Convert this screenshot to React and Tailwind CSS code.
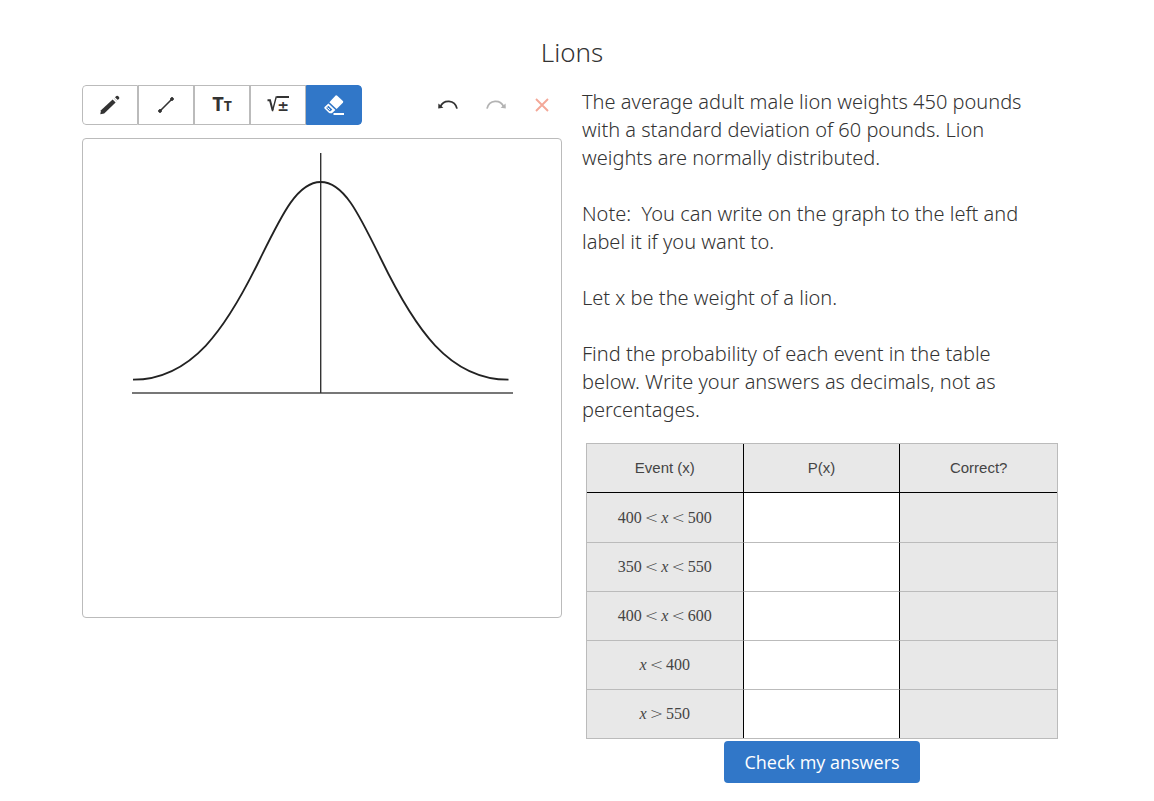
import { useState } from "react";

const PARAGRAPHS = [
  "The average adult male lion weights 450 pounds with a standard deviation of 60 pounds. Lion weights are normally distributed.",
  "Note:\u00a0 You can write on the graph to the left and label it if you want to.",
  "Let x be the weight of a lion.",
  "Find the probability of each event in the table below. Write your answers as decimals, not as percentages.",
];

const EVENTS = [
  ["400", "<", "x", "<", "500"],
  ["350", "<", "x", "<", "550"],
  ["400", "<", "x", "<", "600"],
  ["x", "<", "400"],
  ["x", ">", "550"],
];

function PencilIcon() {
  return (
    <svg width="20" height="20" viewBox="0 0 20 20" fill="currentColor">
      <path d="M0.3 19.2L1 15.3L12.6 4.4L15.6 7.4L4.2 18.4Z" />
      <path d="M13.6 3.4L16.6 6.4L17.1 5.9L14.1 2.9Z" opacity="0.3" />
      <path d="M15 2.2L16.4 0.9Q17.2 0.4 18 1.1L19 2.1Q19.7 3 19 3.8L17.8 5Z" />
    </svg>
  );
}

function LineIcon() {
  return (
    <svg width="16" height="16" viewBox="0 0 16 16" fill="currentColor" stroke="currentColor">
      <path d="M2 14L14 2" strokeWidth="1.6" />
      <circle cx="2" cy="14" r="1.4" />
      <circle cx="14" cy="2" r="1.4" />
    </svg>
  );
}

function TextIcon() {
  return (
    <span className="flex items-baseline font-['Open_Sans',sans-serif] font-bold leading-5">
      <span className="text-xl leading-5">T</span>
      <span className="text-sm leading-5">T</span>
    </span>
  );
}

// radical sign with a real plus-minus under its bar
function MathIcon() {
  return (
    <span className="flex items-start">
      <svg width="10" height="16" viewBox="0 0 10 16" fill="none" stroke="currentColor">
        <path d="M0.5 4.2H3L5.6 14.2" strokeWidth="2" />
        <path d="M5.4 15.2L9.2 1H10" strokeWidth="1.4" />
      </svg>
      <span className="border-t-2 font-['DejaVu_Sans',sans-serif] text-sm leading-4 font-bold">±</span>
    </span>
  );
}

function EraserIcon() {
  return (
    <svg width="22" height="20" viewBox="0 0 22 20" fill="none">
      <path d="M12.6 0.6Q13.4 0 14.2 0.7L19.9 6.1Q20.6 6.9 19.9 7.7L13.6 14L6.4 7.2Z" fill="currentColor" />
      <path
        d="M5.4 8.4L1.6 11.9Q0.9 12.6 1.5 13.4L5.6 17.6Q6.3 18.3 7.1 18.2H8.9L12.4 15Z"
        fill="currentColor"
      />
      <path d="M5.3 10.8L3.2 12.9L6.4 16.2H7.6L9.3 14.6Z" fill="#3177c8" />
      <path d="M4.4 12.6L7 14.8" stroke="currentColor" strokeWidth="1" />
      <path d="M10.5 19H21" stroke="currentColor" strokeWidth="1.8" />
    </svg>
  );
}

function UndoIcon({ className }) {
  return (
    <svg className={className} width="20" height="10" viewBox="0 0 20 10" fill="none">
      <path d="M2.4 6.6C5.4-0.6 16.8-1 19 8.6" stroke="currentColor" strokeWidth="1.8" />
      <path d="M0.4 3.4L0.2 8.6L5.4 7.8Z" fill="currentColor" />
    </svg>
  );
}

const TOOLS = [
  { label: "Pencil", icon: PencilIcon },
  { label: "Line", icon: LineIcon },
  { label: "Text", icon: TextIcon },
  { label: "Math", icon: MathIcon },
  { label: "Eraser", icon: EraserIcon },
];

function Toolbar() {
  const [active, setActive] = useState("Eraser");

  return (
    <div className="flex items-center justify-between">
      <div className="flex overflow-hidden rounded-sm">
        {TOOLS.map(({ label, icon: Icon }) => (
          <button
            key={label}
            aria-label={label}
            aria-pressed={active === label}
            onClick={() => setActive(label)}
            className={`flex h-10 w-14 items-center justify-center border first:rounded-l-sm last:rounded-r-sm ${
              active === label
                ? "border-[#3177c8] bg-[#3177c8] text-white"
                : "border-[#bbb] bg-white text-[#333]"
            }`}
          >
            <Icon />
          </button>
        ))}
      </div>
      <div className="flex items-center gap-7 pr-3">
        <button aria-label="Undo" className="text-[#333]">
          <UndoIcon />
        </button>
        <button aria-label="Redo" className="text-[#b3b3b3]">
          <UndoIcon className="-scale-x-100" />
        </button>
        <button aria-label="Clear" className="text-[#f4a898]">
          <svg width="16" height="16" viewBox="0 0 16 16" fill="none" stroke="currentColor" strokeWidth="1.9">
            <path d="M2 2L14 14M14 2L2 14" />
          </svg>
        </button>
      </div>
    </div>
  );
}

function Graph() {
  return (
    <div className="aspect-square rounded-sm border border-[#bbb]">
      <svg className="block h-full w-full" viewBox="83 139 478 478" fill="none">
        <path d="M132 393H513" stroke="#777" strokeWidth="1.8" />
        <path d="M320.7 153V393" stroke="#333" strokeWidth="1.4" />
        <path
          d="M133 379.7C192 379.5 226 329 260 259C283 212 298 182 320.7 182C343.4 182 358 212 381 259C415 329 449 379.5 508.5 379.7"
          stroke="#222"
          strokeWidth="1.8"
        />
      </svg>
    </div>
  );
}

function Expression({ parts }) {
  return (
    <span className="flex items-center justify-center gap-[3px] font-['Liberation_Serif',serif] text-base">
      {parts.map((part, i) => {
        if (part === "x") return <i key={i}>{part}</i>;
        if (part === "<" || part === ">") {
          return (
            <span key={i} className="font-['DejaVu_Sans',sans-serif] text-base font-extralight">
              {part}
            </span>
          );
        }
        return <span key={i}>{part}</span>;
      })}
    </span>
  );
}

function EventTable() {
  return (
    <div className="px-1">
      <table className="w-full table-fixed border-separate border-spacing-0 border border-[#bbb] font-['Liberation_Sans',sans-serif] text-[15px] text-[#444]">
        <thead>
          <tr className="h-[49px] bg-[#e8e8e8]">
            <th className="border-r border-b border-black p-0 font-normal">Event (x)</th>
            <th className="border-r border-b border-black p-0 font-normal">P(x)</th>
            <th className="border-b border-black p-0 font-normal">Correct?</th>
          </tr>
        </thead>
        <tbody>
          {EVENTS.map((parts, i) => {
            const line = i < EVENTS.length - 1 ? "border-b border-b-[#bbb]" : "";
            return (
              <tr key={i} className="first:h-[50px]">
                <td className={`border-r border-r-black bg-[#e8e8e8] p-0 ${line}`}>
                  <Expression parts={parts} />
                </td>
                <td className={`border-r border-r-black bg-white p-0 ${line}`}>
                  <input
                    type="text"
                    aria-label={`P(${parts.join(" ")})`}
                    className="block h-12 w-full px-2 text-center outline-none"
                  />
                </td>
                <td className={`bg-[#e8e8e8] p-0 ${line}`} />
              </tr>
            );
          })}
        </tbody>
      </table>
    </div>
  );
}

export default function App() {
  return (
    <main className="bg-white pt-[34px] pr-[92px] pb-4 pl-[82px] font-['Noto_Sans','Open_Sans',sans-serif] text-[#333]">
      <h1 className="text-center text-[26px] leading-9 font-light">Lions</h1>
      <div className="mt-[14px] grid grid-cols-2 gap-5">
        <section className="flex flex-col gap-[13px] pt-px">
          <Toolbar />
          <Graph />
        </section>
        <section className="flex flex-col pt-1">
          <div className="flex flex-col gap-7 pr-4 text-xl leading-7 font-light">
            {PARAGRAPHS.map((text) => (
              <p key={text}>{text}</p>
            ))}
          </div>
          <div className="mt-[19px]">
            <EventTable />
          </div>
          <button className="mt-[2px] h-[42px] self-center rounded-sm bg-[#3177c8] px-5 font-['Open_Sans',sans-serif] text-lg text-white">
            Check my answers
          </button>
        </section>
      </div>
    </main>
  );
}
